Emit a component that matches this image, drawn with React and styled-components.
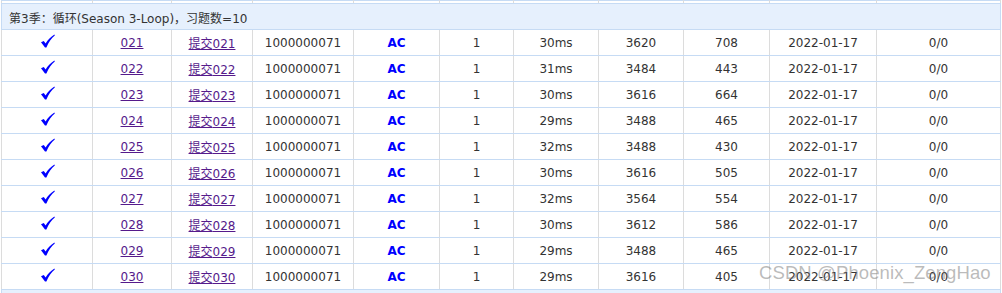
import React from 'react';
import styled, { createGlobalStyle } from 'styled-components';

const GlobalStyle = createGlobalStyle`
  html, body {
    margin: 0;
    padding: 0;
    background: #fff;
    overflow: hidden;
  }
  body {
    font-family: "DejaVu Sans", Verdana, sans-serif;
    font-size: 12px;
    color: #333;
  }
`;

const Page = styled.div`
  position: relative;
  width: 1002px;
  height: 293px;
  overflow: hidden;
  padding-left: 1px;
  box-sizing: border-box;
`;

const Table = styled.table`
  border-collapse: collapse;
  table-layout: fixed;
  width: 999px;
`;

const Cell = styled.td`
  height: ${({ $h }) => $h || 25}px;
  padding: 0;
  text-align: center;
  vertical-align: middle;
  border-top: 1px solid #c6dbf4;
  border-bottom: 1px solid #c6dbf4;
  border-left: 1px solid #dcdcdc;
  border-right: 1px solid #dcdcdc;
  white-space: nowrap;
  overflow: hidden;
`;

const SeasonCell = styled.td`
  height: 24px;
  padding: 1px 0 0 7px;
  text-align: left;
  vertical-align: middle;
  background: #e6f0fd;
  border: 1px solid #c6dbf4;
  color: #333;
  font-family: "DejaVu Sans", "Noto Sans CJK SC", sans-serif;
`;

const ProblemLink = styled.a`
  color: #551a8b;
  text-decoration: underline;
  font-family: "DejaVu Sans", "Noto Sans CJK SC", sans-serif;
`;

const Verdict = styled.span`
  color: #0000ff;
  font-weight: bold;
`;

const CheckIcon = styled.svg`
  display: block;
  margin: -3px auto 0;
`;

const Watermark = styled.div`
  position: absolute;
  left: 759px;
  top: 262px;
  font-family: "Liberation Sans", Arial, sans-serif;
  font-size: 18.5px;
  letter-spacing: 0.1px;
  color: rgba(120, 120, 120, 0.5);
  white-space: nowrap;
  pointer-events: none;
`;

const widths = [91, 79, 81, 101, 86, 74, 85, 85, 86, 107, 124];

const rows = [
  ['021', '30ms', 3620, 708],
  ['022', '31ms', 3484, 443],
  ['023', '30ms', 3616, 664],
  ['024', '29ms', 3488, 465],
  ['025', '32ms', 3488, 430],
  ['026', '30ms', 3616, 505],
  ['027', '32ms', 3564, 554],
  ['028', '30ms', 3612, 586],
  ['029', '29ms', 3488, 465],
  ['030', '29ms', 3616, 405],
];

function Check() {
  return (
    <CheckIcon width="15" height="14" viewBox="0 0 15 14">
      <path
        d="M1 8.2 L3.8 7 L5.6 9.6 C8 5.8 10.6 3 14.4 0.6 L14.8 1.4 C11.4 4.2 8.6 8 6.4 13.4 L5 13.4 Z"
        fill="#0000ff"
      />
    </CheckIcon>
  );
}

export default function App() {
  return (
    <Page>
      <GlobalStyle />
      <Table>
        <colgroup>
          {widths.map((w, i) => (
            <col key={i} style={{ width: w }} />
          ))}
        </colgroup>
        <tbody>
          <tr>
            {widths.map((w, i) => (
              <Cell key={i} $h={2} />
            ))}
          </tr>
          <tr>
            <SeasonCell colSpan={11}>第3季：循环(Season 3-Loop)，习题数=10</SeasonCell>
          </tr>
          {rows.map(([id, time, mem, len]) => (
            <tr key={id}>
              <Cell>
                <Check />
              </Cell>
              <Cell>
                <ProblemLink href="#">{id}</ProblemLink>
              </Cell>
              <Cell>
                <ProblemLink href="#">提交{id}</ProblemLink>
              </Cell>
              <Cell>1000000071</Cell>
              <Cell>
                <Verdict>AC</Verdict>
              </Cell>
              <Cell>1</Cell>
              <Cell>{time}</Cell>
              <Cell>{mem}</Cell>
              <Cell>{len}</Cell>
              <Cell>2022-01-17</Cell>
              <Cell>0/0</Cell>
            </tr>
          ))}
          <tr>
            <SeasonCell colSpan={11} />
          </tr>
        </tbody>
      </Table>
      <Watermark>CSDN @Phoenix_ZengHao</Watermark>
    </Page>
  );
}
